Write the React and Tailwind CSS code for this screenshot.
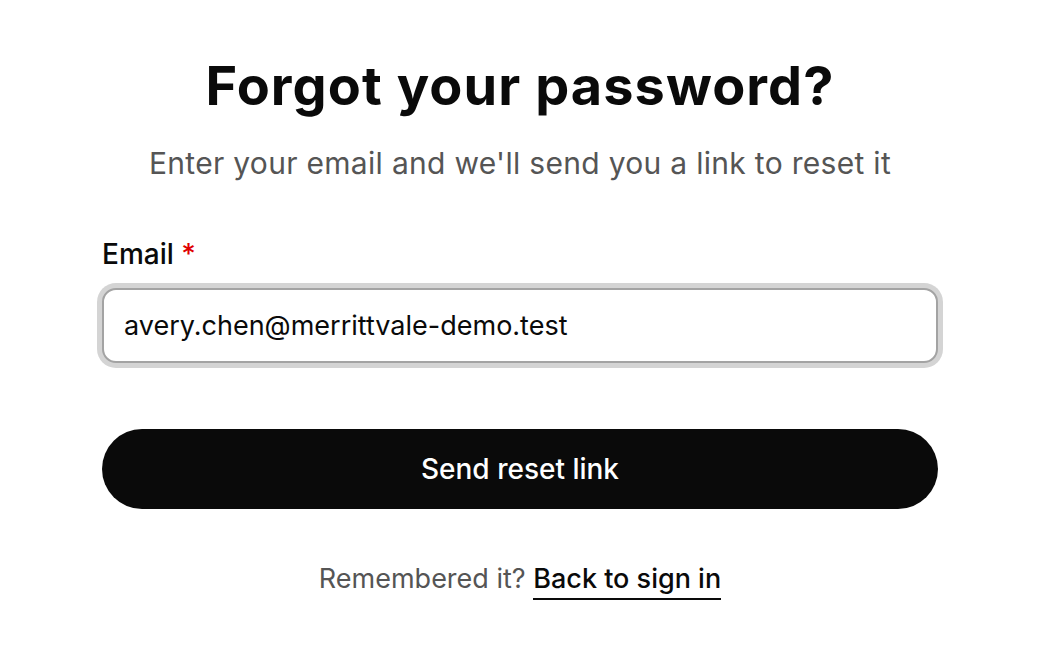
import React, { useState } from 'react';

export default function App() {
  const [email, setEmail] = useState('avery.chen@merrittvale-demo.test');

  return (
    <div className="min-h-screen bg-white font-['Inter',sans-serif] text-[#0a0a0a]">
      <div className="mx-auto flex w-[836px] flex-col pt-[54px]">
        <h1 className="text-center text-[54px] font-bold leading-[64px] tracking-[0.02em]">Forgot your password?</h1>
        <p className="mt-[25px] text-center text-[30px] leading-[40px] tracking-[0.01em] text-[#555555]">
          Enter your email and we'll send you a link to reset it
        </p>

        <form className="mt-[53px] flex flex-col" onSubmit={(e) => e.preventDefault()}>
          <label htmlFor="email" className="text-[28px] font-medium leading-[36px]">
            Email <span className="text-[#e00000]">*</span>
          </label>
          <input
            id="email"
            type="email"
            value={email}
            onChange={(e) => setEmail(e.target.value)}
            className="mt-[16px] h-[75px] w-full rounded-[14px] border-2 border-[#a3a3a3] bg-white px-[20px] text-[27px] text-[#0a0a0a] outline-none ring-[5px] ring-[#d4d4d4]"
          />
          <button
            type="submit"
            className="mt-[66px] h-[80px] w-full rounded-full bg-[#0a0a0a] text-[28px] font-medium text-white"
          >
            Send reset link
          </button>
        </form>

        <p className="mt-[52px] text-center text-[27px] leading-[36px] text-[#555555]">
          Remembered it?{' '}
          <a href="#" className="border-b-2 border-[#0a0a0a] pb-[3px] font-medium text-[#0a0a0a]">
            Back to sign in
          </a>
        </p>
      </div>
    </div>
  );
}
